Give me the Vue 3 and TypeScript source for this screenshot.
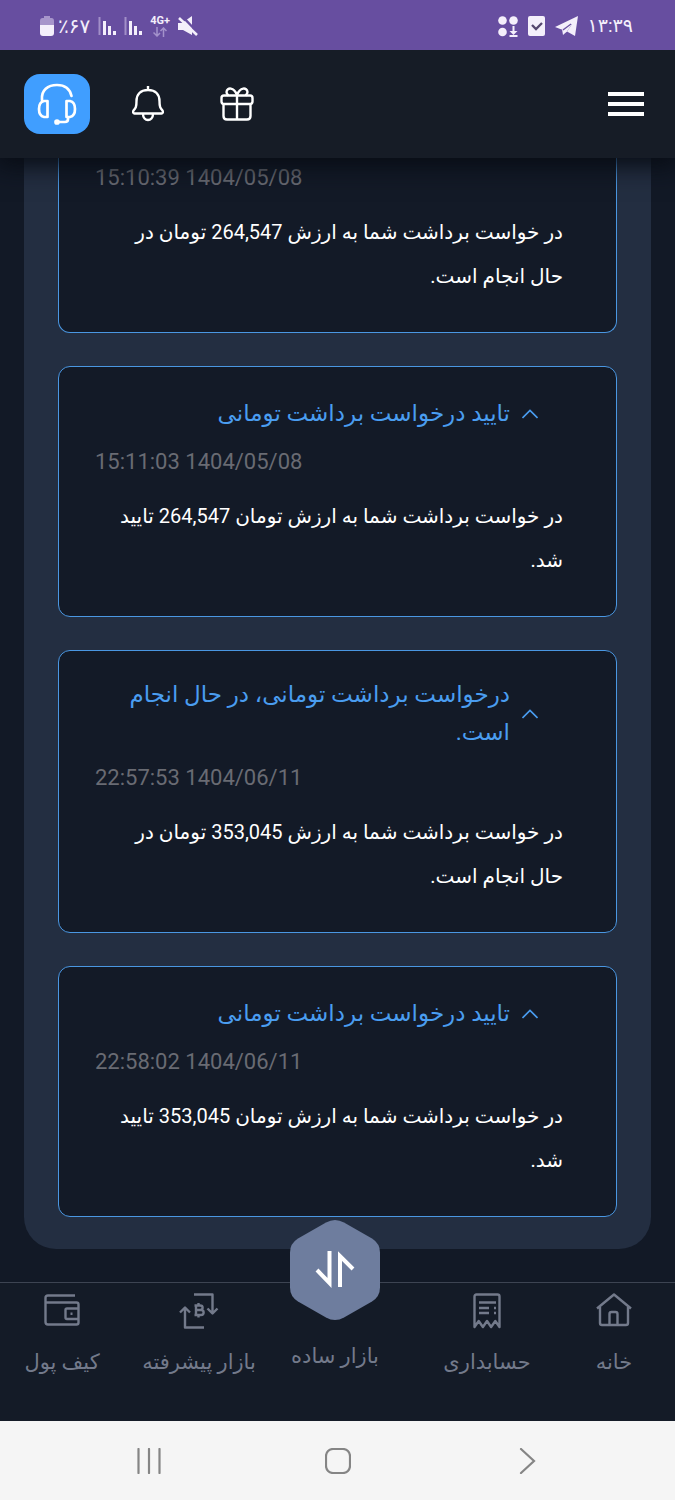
<script setup lang="ts">
interface Notice {
  id: number
  title: string
  time: string
  body: string
}

interface NavItem {
  key: string
  label: string
}

const notices: Notice[] = [
  {
    id: 1,
    title: '',
    time: '15:10:39 1404/05/08',
    body: 'در خواست برداشت شما به ارزش 264,547 تومان در حال انجام است.',
  },
  {
    id: 2,
    title: 'تایید درخواست برداشت تومانی',
    time: '15:11:03 1404/05/08',
    body: 'در خواست برداشت شما به ارزش تومان 264,547 تایید شد.',
  },
  {
    id: 3,
    title: 'درخواست برداشت تومانی، در حال انجام است.',
    time: '22:57:53 1404/06/11',
    body: 'در خواست برداشت شما به ارزش 353,045 تومان در حال انجام است.',
  },
  {
    id: 4,
    title: 'تایید درخواست برداشت تومانی',
    time: '22:58:02 1404/06/11',
    body: 'در خواست برداشت شما به ارزش تومان 353,045 تایید شد.',
  },
]

const navItems: NavItem[] = [
  { key: 'home', label: 'خانه' },
  { key: 'accounting', label: 'حسابداری' },
  { key: 'simple', label: 'بازار ساده' },
  { key: 'advanced', label: 'بازار پیشرفته' },
  { key: 'wallet', label: 'کیف پول' },
]
</script>

<template>
  <div class="app" dir="rtl" lang="fa">
    <div class="status" dir="ltr">
      <div class="status-group">
        <span class="battery">
          <svg width="14" height="22" viewBox="0 0 14 22" aria-hidden="true">
            <path d="M4 1h6v2h1.500Q14 3 14 6v5H0V6q0-3 2.500-3H4z" fill="#a795cb" />
            <path d="M0 10h14v8q0 3-3 3H3q-3 0-3-3z" fill="#f4effb" />
          </svg>
          <span class="percent">٪۶۷</span>
        </span>
        <svg v-for="n in 2" :key="n" width="18" height="20" viewBox="0 0 18 20" aria-hidden="true">
          <path d="M1.500 1v18" stroke="#a28fc8" stroke-width="2" />
          <path d="M6.500 5v14M11.500 10v9M16.500 15v4" stroke="#f4effb" stroke-width="3" />
        </svg>
        <span class="network">
          <span>4G+</span>
          <svg width="14" height="10" viewBox="0 0 14 10" fill="none" stroke="#a492cb" stroke-width="1.500" aria-hidden="true">
            <path d="M4 0v9M0.500 5.500 4 9l3-3M10.500 10V1M7.500 4l3-3 3 3" />
          </svg>
        </span>
        <svg width="20" height="20" viewBox="0 0 20 20" aria-hidden="true">
          <path d="M0 7h4l10-7v19l-9-5H0z" fill="#f4effb" />
          <path d="M4 0 20 17" stroke="#674ea0" stroke-width="2.500" />
          <path d="M1 2 19 19" stroke="#f4effb" stroke-width="2.500" />
        </svg>
      </div>
      <div class="status-group right">
        <svg width="20" height="21" viewBox="0 0 20 21" fill="#f4effb" aria-hidden="true">
          <circle cx="4.500" cy="4.500" r="4.300" /><circle cx="15.500" cy="4.500" r="4.300" /><circle cx="4.500" cy="16" r="4.300" />
          <path d="M14.500 10h2v5h3l-4 4-4-4h3zM11.500 19h8v2h-8z" />
        </svg>
        <svg width="17" height="20" viewBox="0 0 17 20" aria-hidden="true">
          <rect width="17" height="20" rx="2" fill="#f4effb" />
          <path d="m4 9 4 4 6-6" fill="none" stroke="#55476f" stroke-width="2.300" />
        </svg>
        <svg width="23" height="21" viewBox="0 0 23 21" aria-hidden="true">
          <path d="M0 11 23 0l-3 20-8-4.500L17 8 6.500 13.500z" fill="#f4effb" />
          <path d="M7 13 17 8l-5 7.500L8 19z" fill="#f4effb" />
          <path d="M8 14 16 8" stroke="#674ea0" stroke-width="1.200" />
        </svg>
        <time class="clock">۱۳:۳۹</time>
      </div>
    </div>

    <header class="header">
      <button type="button" aria-label="منو">
        <svg width="36" height="24" viewBox="0 0 36 24" fill="#fff"><path d="M0 0h36v4H0zM0 10h36v4H0zM0 20h36v4H0z" /></svg>
      </button>
      <div class="actions">
        <button type="button" aria-label="هدیه">
          <svg width="34" height="34" viewBox="0 0 34 34" fill="none" stroke="#fff" stroke-width="2.400">
            <rect x="1.500" y="8.500" width="31" height="8.500" rx="2.500" />
            <path d="M3.500 17v12q0 3.500 3.500 3.500h20q3.500 0 3.500-3.500V17M17 8v24.500M17 8C14 0 7 0 6.500 5q0 2 2 3.500M17 8c3-8 10-8 10.500-3q0 2-2 3.500" />
          </svg>
        </button>
        <button type="button" aria-label="اعلان‌ها">
          <svg width="32" height="36" viewBox="0 0 32 36" fill="none" stroke="#fff" stroke-width="2.400" stroke-linejoin="round">
            <path d="M16 0v4M16 4C8 4 4.500 9 4.500 15c0 6-.8 7-3 9.500-.9 1.500-.2 3 1 3h27c1.200 0 1.900-1.500 1-3-2.200-2.500-3-3.500-3-9.500C27.500 9 24 4 16 4zM11 28c0 8 10 8 10 0" />
          </svg>
        </button>
        <button class="support" type="button" aria-label="پشتیبانی">
          <svg width="40" height="42" viewBox="0 0 40 42" fill="none" stroke="#fff" stroke-width="2.700" stroke-linejoin="round" stroke-linecap="round">
            <path d="M5 17C4 7 11 2 20 2c8 0 13 4.500 14.500 11" />
            <path d="M10.500 18v16H7q-5-1-5-8t5-8zM29.500 18v16H33q5-1 5-8t-5-8zM31 34v2q0 3-3 3h-8" />
            <circle cx="20" cy="39" r="1.500" fill="#fff" />
          </svg>
        </button>
      </div>
    </header>

    <main class="main">
      <section class="panel">
        <article v-for="notice in notices" :key="notice.id" class="card" :class="{ continued: !notice.title }">
          <h2 v-if="notice.title" class="title">
            <button class="toggle" type="button" aria-expanded="true">
              <svg width="16" height="10" viewBox="0 0 16 10" fill="none" stroke="currentColor" stroke-width="1.600" aria-hidden="true">
                <path d="m.5 9 7.500-7.500L15.500 9" />
              </svg>
              <span>{{ notice.title }}</span>
            </button>
          </h2>
          <time class="date" dir="ltr">{{ notice.time }}</time>
          <p class="body">{{ notice.body }}</p>
        </article>
      </section>
    </main>

    <nav class="nav">
      <a v-for="item in navItems" :key="item.key" class="nav-item" href="#">
        <svg v-if="item.key === 'home'" width="36" height="36" viewBox="0 0 36 36" class="line-icon">
          <path d="M1 15.500 18 1.500l17 14M4 14v16q0 2 2 2h24q2 0 2-2V14M13.500 32V21q0-2 2-2h4q2 0 2 2v11" />
        </svg>
        <svg v-else-if="item.key === 'accounting'" width="28" height="36" viewBox="0 0 28 36" class="line-icon">
          <path d="M1.500 34V3.500q0-2 2-2h21q2 0 2 2V34l-4.200-6-4.200 6-4.100-6-4.100 6-4.200-6zM6 9.500h17M6 15h10M6 20h10M21 15h2M21 20h2" />
        </svg>
        <svg v-else-if="item.key === 'simple'" class="hex" width="92" height="100" viewBox="0 0 92 100">
          <path d="M37 2.500q9-5 18 0l28 16q8 5 8 14v35q0 9-8 14L55 97.500q-9 5-18 0l-28-16q-8-5-8-14v-35q0-9 8-14z" fill="#6e7d9e" />
          <path d="M28 50 40.500 63V31M51 67V36L64 49" fill="none" stroke="#fff" stroke-width="4" />
        </svg>
        <svg v-else-if="item.key === 'advanced'" width="40" height="36" viewBox="0 0 40 36" class="line-icon">
          <path d="M15 1.500h18.500V20M28.500 15.500l5 5 5-5M25 34.500H6V15M1 19.500l5-5 5 5" />
          <path d="M15.500 12.500H21c3.500 0 3.500 4.500 0 4.500h-4 5c3.500 0 3.500 5 0 5h-6.500M17 12.500V22M19.500 10v2.500M19.500 22v2.500" />
        </svg>
        <svg v-else width="36" height="36" viewBox="0 0 36 36" class="line-icon">
          <path d="M31 2.500H4q-2.500 0-2.500 2.500v24q0 2.500 2.500 2.500h28.500q2 0 2-2v-18q0-2-2-2H2M34 15.500H23q-1.500 0-1.500 1.500v7.500q0 1.500 1.500 1.500h11M26.500 20.700h2" />
        </svg>
        <span class="label">{{ item.label }}</span>
      </a>
    </nav>

    <div class="system" dir="ltr">
      <button type="button" aria-label="برنامه‌های اخیر">
        <svg width="26" height="26" viewBox="0 0 26 26"><path d="M2.500 1v24M13 1v24M23.500 1v24" /></svg>
      </button>
      <button type="button" aria-label="صفحه اصلی گوشی">
        <svg width="26" height="26" viewBox="0 0 26 26"><rect x="1" y="1" width="24" height="24" rx="7" /></svg>
      </button>
      <button type="button" aria-label="بازگشت">
        <svg width="26" height="26" viewBox="0 0 26 26"><path d="m7 1 13 12L7 25" /></svg>
      </button>
    </div>
  </div>
</template>

<style>
body {
  margin: 0;
  background: #121926;
}
</style>

<style scoped>
.app {
  min-height: 100vh;
  display: flex;
  flex-direction: column;
  background: #121926;
  color: #fff;
  font-family: Roboto, "DejaVu Sans", sans-serif;
}
button {
  padding: 0;
  border: 0;
  background: none;
  color: inherit;
  font: inherit;
  cursor: pointer;
}
svg {
  display: block;
  flex: none;
}
.status {
  position: relative;
  z-index: 3;
  height: 50px;
  flex: none;
  box-sizing: border-box;
  padding: 2px 42px 0 40px;
  display: flex;
  align-items: center;
  justify-content: space-between;
  background: #674ea0;
  color: #f4effb;
}
.status-group {
  display: flex;
  align-items: center;
  gap: 8px;
}
.status-group.right {
  gap: 10px;
}
.battery {
  display: flex;
  align-items: center;
  gap: 4px;
}
.percent {
  font-size: 20px;
  line-height: 24px;
}
.clock {
  font-size: 19px;
  line-height: 24px;
}
.network {
  display: flex;
  flex-direction: column;
  align-items: center;
  font-size: 11px;
  line-height: 12px;
  font-weight: 700;
}
.header {
  position: relative;
  z-index: 2;
  height: 108px;
  flex: none;
  box-sizing: border-box;
  padding: 0 31px 0 24px;
  display: flex;
  align-items: center;
  justify-content: space-between;
  background: #161c26;
  box-shadow: 0 4px 24px 4px #080c14;
}
.actions {
  display: flex;
  align-items: center;
  gap: 56px;
}
.support {
  width: 66px;
  height: 60px;
  margin-right: -14px;
  border-radius: 16px;
  background: #409eff;
  display: grid;
  place-items: center;
}
.main {
  flex: 1;
  padding: 0 24px 33px;
}
.panel {
  padding: 0 34px 32px;
  border-radius: 0 0 32px 32px;
  background: #232e41;
  display: flex;
  flex-direction: column;
  gap: 33px;
}
.card {
  padding: 25px 53px 34px 36px;
  border: 1px solid #4a97e2;
  border-radius: 12px;
  background: #131a27;
}
.card.continued {
  padding-top: 0;
  border-top: 0;
  border-radius: 0 0 12px 12px;
}
.title {
  min-height: 44px;
  margin: 0;
  padding-right: 25px;
  display: flex;
  align-items: center;
  font-size: 23px;
  font-weight: 400;
  line-height: 38px;
  color: #4a9df0;
}
.toggle {
  display: flex;
  align-items: center;
  gap: 12px;
  text-align: right;
}
.date {
  display: block;
  margin-top: 13px;
  font-size: 22px;
  line-height: 26px;
  text-align: left;
  color: #696b73;
}
.continued .date {
  margin-top: 7px;
}
.body {
  margin: 19px 0 0 12px;
  font-size: 20px;
  line-height: 44px;
}
.nav {
  min-height: 139px;
  flex: none;
  box-sizing: border-box;
  padding: 10px 25px 0 0;
  border-top: 1px solid #3d4452;
  display: grid;
  grid-template-columns: 72fr 182fr 122fr 150fr 124fr;
  background: #141b27;
}
.nav-item {
  display: flex;
  flex-direction: column;
  align-items: center;
  color: #737a8b;
  text-decoration: none;
  white-space: nowrap;
}
.line-icon {
  fill: none;
  stroke: currentColor;
  stroke-width: 2.4;
  stroke-linejoin: round;
}
.label {
  margin-top: 16px;
  font-size: 21px;
  line-height: 34px;
}
.hex {
  margin: -73px 0 3px;
}
.system {
  height: 79px;
  flex: none;
  padding: 0 54px;
  display: grid;
  grid-template-columns: repeat(3, 1fr);
  align-items: center;
  justify-items: center;
  background: #f5f5f5;
}
.system svg {
  fill: none;
  stroke: #858585;
  stroke-width: 2.2;
  stroke-linecap: round;
}
</style>
